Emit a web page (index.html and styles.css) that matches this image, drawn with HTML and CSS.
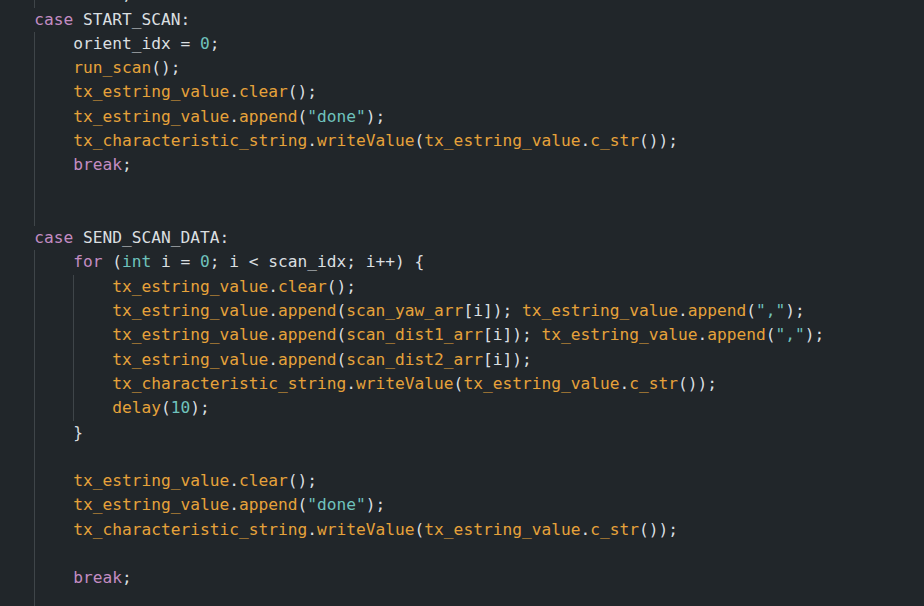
FILE: index.html
```html
<!DOCTYPE html>
<html>
<head>
<meta charset="utf-8">
<link rel="stylesheet" href="styles.css">
</head>
<body>
<div class="editor">
<div class="code">
<div class="ln"><span class="i"></span><span class="i g"></span><span class="k">break</span>;</div>
<div class="ln"><span class="i"></span><span class="k">case</span> START_SCAN:</div>
<div class="ln"><span class="i"></span><span class="i g"></span>orient_idx = <span class="n">0</span>;</div>
<div class="ln"><span class="i"></span><span class="i g"></span><span class="f">run_scan</span>();</div>
<div class="ln"><span class="i"></span><span class="i g"></span><span class="f">tx_estring_value</span>.<span class="f">clear</span>();</div>
<div class="ln"><span class="i"></span><span class="i g"></span><span class="f">tx_estring_value</span>.<span class="f">append</span>(<span class="n">"done"</span>);</div>
<div class="ln"><span class="i"></span><span class="i g"></span><span class="f">tx_characteristic_string</span>.<span class="f">writeValue</span>(<span class="f">tx_estring_value</span>.<span class="f">c_str</span>());</div>
<div class="ln"><span class="i"></span><span class="i g"></span><span class="k">break</span>;</div>
<div class="ln"><span class="i"></span><span class="i g"></span></div>
<div class="ln"><span class="i"></span><span class="i g"></span></div>
<div class="ln"><span class="i"></span><span class="k">case</span> SEND_SCAN_DATA:</div>
<div class="ln"><span class="i"></span><span class="i g"></span><span class="k">for</span> (<span class="n">int</span> i = <span class="n">0</span>; i &lt; scan_idx; i++) {</div>
<div class="ln"><span class="i"></span><span class="i g"></span><span class="i g"></span><span class="f">tx_estring_value</span>.<span class="f">clear</span>();</div>
<div class="ln"><span class="i"></span><span class="i g"></span><span class="i g"></span><span class="f">tx_estring_value</span>.<span class="f">append</span>(<span class="f">scan_yaw_arr</span>[i]); <span class="f">tx_estring_value</span>.<span class="f">append</span>(<span class="n">","</span>);</div>
<div class="ln"><span class="i"></span><span class="i g"></span><span class="i g"></span><span class="f">tx_estring_value</span>.<span class="f">append</span>(<span class="f">scan_dist1_arr</span>[i]); <span class="f">tx_estring_value</span>.<span class="f">append</span>(<span class="n">","</span>);</div>
<div class="ln"><span class="i"></span><span class="i g"></span><span class="i g"></span><span class="f">tx_estring_value</span>.<span class="f">append</span>(<span class="f">scan_dist2_arr</span>[i]);</div>
<div class="ln"><span class="i"></span><span class="i g"></span><span class="i g"></span><span class="f">tx_characteristic_string</span>.<span class="f">writeValue</span>(<span class="f">tx_estring_value</span>.<span class="f">c_str</span>());</div>
<div class="ln"><span class="i"></span><span class="i g"></span><span class="i g"></span><span class="f">delay</span>(<span class="n">10</span>);</div>
<div class="ln"><span class="i"></span><span class="i g"></span>}</div>
<div class="ln"><span class="i"></span><span class="i g"></span></div>
<div class="ln"><span class="i"></span><span class="i g"></span><span class="f">tx_estring_value</span>.<span class="f">clear</span>();</div>
<div class="ln"><span class="i"></span><span class="i g"></span><span class="f">tx_estring_value</span>.<span class="f">append</span>(<span class="n">"done"</span>);</div>
<div class="ln"><span class="i"></span><span class="i g"></span><span class="f">tx_characteristic_string</span>.<span class="f">writeValue</span>(<span class="f">tx_estring_value</span>.<span class="f">c_str</span>());</div>
<div class="ln"><span class="i"></span><span class="i g"></span></div>
<div class="ln"><span class="i"></span><span class="i g"></span><span class="k">break</span>;</div>
<div class="ln"><span class="i"></span><span class="i g"></span></div>
</div>
</div>
</body>
</html>
```
FILE: styles.css
```css
html, body {
  margin: 0;
  padding: 0;
  background: #21262a;
  overflow: hidden;
}
.editor {
  width: 924px;
  height: 606px;
  overflow: hidden;
  background: #21262a;
}
.code {
  margin-top: -16.8px;
  margin-left: -4.9px;
  font-family: "DejaVu Sans Mono", monospace;
  font-size: 16.22px;
  line-height: 24.3px;
  color: #dadfe0;
}
.ln {
  height: 24.3px;
  display: flex;
  align-items: stretch;
  white-space: pre;
}
.i {
  display: inline-block;
  width: 4ch;
  flex: none;
}
.g {
  box-shadow: inset 1px 0 0 #3f4549;
}
.k { color: #c38cc2; }
.f { color: #e6a23a; }
.n { color: #6fc2bd; }
```
